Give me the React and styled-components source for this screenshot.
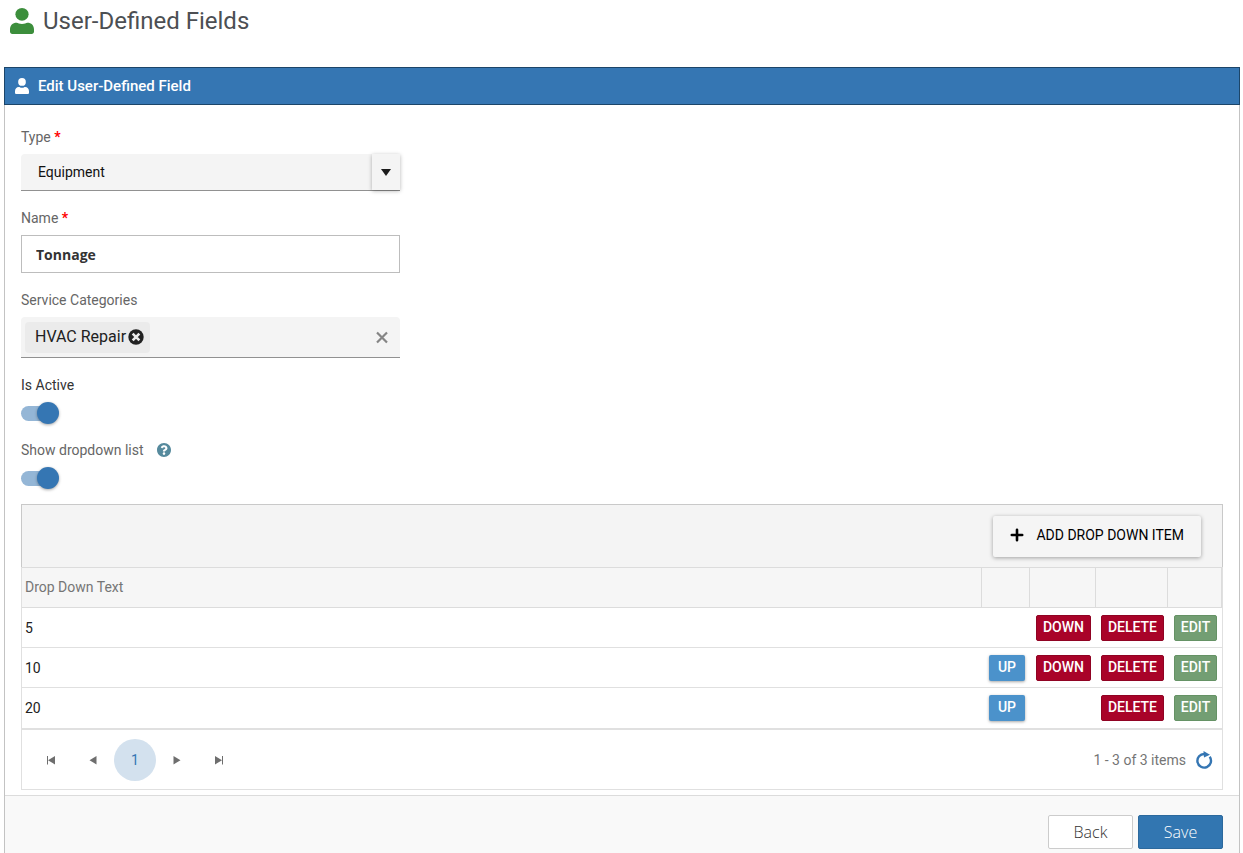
import React, { useState } from "react";
import styled, { createGlobalStyle, css } from "styled-components";

const GlobalStyle = createGlobalStyle`
  *, *::before, *::after { box-sizing: border-box; }
  body {
    margin: 0;
    background: #fff;
    color: #212121;
    font-family: Roboto, "Liberation Sans", sans-serif;
    font-size: 14px;
    line-height: 20px;
  }
  button, input, select { font: inherit; color: inherit; margin: 0; }
  button { cursor: pointer; }
`;

const Page = styled.main`
  padding: 0 3px 0 4px;
`;

const PageTitle = styled.h1`
  display: flex;
  align-items: center;
  gap: 9px;
  height: 41px;
  margin: 0 0 26px;
  padding-left: 6px;
  color: #4c4f53;
  font-size: 24px;
  font-weight: 400;
  line-height: 40px;
`;

const PanelHeader = styled.header`
  display: flex;
  align-items: center;
  gap: 9px;
  height: 38px;
  padding: 0 10px;
  border: 1px solid #1c4569;
  background: #3576b3;
  color: #fff;
`;

const PanelTitle = styled.h2`
  margin: 0;
  font-size: 15px;
  font-weight: 500;
  line-height: 20px;
`;

const PanelBody = styled.form`
  border: solid #c3c3c3;
  border-width: 0 1px;
`;

const Fields = styled.div`
  padding: 22px 16px 5px;
`;

const Field = styled.div`
  display: flex;
  flex-direction: column;
  align-items: flex-start;
  gap: 7px;
  width: 100%;
  max-width: 379px;
  margin-bottom: ${(p) => p.$after || 17}px;
`;

const LabelRow = styled.div`
  display: flex;
  align-items: center;
  gap: 13px;
`;

const Label = styled.label`
  color: ${(p) => (p.$dark ? "#333" : "#666")};
  line-height: 20px;
`;

const Required = styled.span`
  color: #f00;
  font-weight: 700;
`;

const SelectBox = styled.div`
  display: grid;
  width: 100%;
  height: 37px;
  border-bottom: 1px solid #919191;
  border-radius: 4px 4px 0 0;
  background: #f4f4f4;
`;

const Select = styled.select`
  grid-area: 1 / 1;
  width: 100%;
  padding: 0 44px 0 17px;
  border: 0;
  background: transparent;
  appearance: none;
  color: #111;
`;

const SelectCaret = styled.span`
  display: flex;
  grid-area: 1 / 1;
  align-items: center;
  justify-content: center;
  justify-self: end;
  width: 28px;
  background: #f4f4f4;
  box-shadow: 0 1px 4px rgba(0, 0, 0, 0.3);
  pointer-events: none;
`;

const TextInput = styled.input`
  width: 100%;
  height: 38px;
  padding: 0 14px;
  border: 1px solid #bdbdbd;
  border-radius: 0;
  background: #fff;
  color: #333;
  font-family: "Open Sans", sans-serif;
  font-size: 14px;
  font-weight: 700;
`;

const MultiSelect = styled.div`
  display: flex;
  align-items: center;
  width: 100%;
  height: 41px;
  padding: 0 10px 0 4px;
  border-bottom: 1px solid #919191;
  border-radius: 4px 4px 0 0;
  background: #f4f4f4;
`;

const Chip = styled.span`
  display: flex;
  align-items: center;
  gap: 2px;
  height: 31px;
  padding: 0 6px 0 10px;
  border-radius: 4px;
  background: #ebebeb;
  font-size: 16px;
  white-space: nowrap;
`;

const MultiInput = styled.input`
  flex: 1;
  min-width: 0;
  border: 0;
  background: transparent;
  outline: 0;
`;

const IconButton = styled.button`
  display: flex;
  padding: 0;
  border: 0;
  background: none;
  color: ${(p) => p.$color || "#222"};
`;

const Switch = styled.input`
  display: grid;
  align-items: center;
  width: 38px;
  height: 22px;
  appearance: none;
  cursor: pointer;

  &::before,
  &::after {
    content: "";
    grid-area: 1 / 1;
  }

  &::before {
    width: 34px;
    height: 15px;
    border-radius: 8px;
    background: #94b6d6;
  }

  &::after {
    justify-self: end;
    width: 22px;
    height: 22px;
    border-radius: 50%;
    background: #3576b3;
    box-shadow: 0 1px 3px rgba(0, 0, 0, 0.35);
  }

  &:not(:checked)::after {
    justify-self: start;
  }
`;

const Grid = styled.section`
  border: 1px solid #e0e0e0;
`;

const GridToolbar = styled.div`
  display: flex;
  justify-content: flex-end;
  margin: -1px -1px 0;
  padding: 11px 21px 10px;
  border: solid #c9c9c9;
  border-width: 1px 1px 0;
  background: #f4f4f4;
`;

const AddButton = styled.button`
  display: flex;
  align-items: center;
  gap: 12px;
  height: 41px;
  padding: 0 17px 3px;
  border: 0;
  border-radius: 2px;
  background: #f5f5f5;
  box-shadow: 0 1px 4px rgba(0, 0, 0, 0.35);
  color: #000;
  text-transform: uppercase;
`;

const Table = styled.table`
  width: 100%;
  border-spacing: 0;
  table-layout: fixed;
`;

const Col = styled.col`
  width: ${(p) => p.$width};
`;

const HeadCell = styled.th`
  height: 41px;
  padding: 0 3px 2px;
  border: solid #dcdcdc;
  border-width: 1px 1px 1px 0;
  background: #f6f6f6;
  color: #757575;
  font-weight: 400;
  text-align: left;
`;

const Cell = styled.td`
  height: 40px;
  padding: 0 0 0 ${(p) => p.$indent || 3}px;
  border-bottom: 1px solid #e0e0e0;
  color: #212121;

  tr:last-child > & {
    height: 41px;
  }
`;

const tones = {
  up: css`
    width: 36px;
    background: #4b92cb;
    box-shadow: 0 1px 3px rgba(0, 0, 0, 0.35);
  `,
  down: css`
    width: 55px;
    background: #a90329;
    border-color: #900323;
  `,
  remove: css`
    width: 63px;
    background: #a90329;
    border-color: #900323;
  `,
  edit: css`
    width: 43px;
    background: #739e73;
    border-color: #659265;
  `,
};

const RowButton = styled.button`
  display: block;
  height: 26px;
  padding: 0 0 2px;
  border: 1px solid transparent;
  border-radius: 2px;
  color: #fff;
  font-weight: 500;
  line-height: 20px;
  text-align: center;
  ${(p) => tones[p.$tone]}
`;

const Pager = styled.nav`
  display: flex;
  align-items: center;
  height: 60px;
  padding: 0 9px 0 8px;
  border-top: 1px solid #e0e0e0;
`;

const PageButton = styled.button`
  display: flex;
  align-items: center;
  justify-content: center;
  width: 42px;
  height: 42px;
  padding: 0;
  border: 0;
  border-radius: 50%;
  background: ${(p) => (p.$current ? "#d3e1ee" : "transparent")};
  color: ${(p) => (p.$current ? "#3576b3" : "#6e6e6e")};
`;

const PagerInfo = styled.span`
  margin: 0 9px 0 auto;
  color: #757575;
`;

const Footer = styled.footer`
  display: flex;
  justify-content: flex-end;
  gap: 5px;
  padding: 19px 16px 4px;
  border-top: 1px solid #dcdcdc;
  background: #f9f9f9;
`;

const FooterButton = styled.button`
  width: 85px;
  height: 34px;
  padding: 0;
  border: 1px solid ${(p) => (p.$primary ? "#2c699d" : "#ccc")};
  border-radius: 2px;
  background: ${(p) => (p.$primary ? "#3276b1" : "#fff")};
  color: ${(p) => (p.$primary ? "#fff" : "#333")};
  font-family: "Open Sans", sans-serif;
  font-size: 16px;
  font-weight: 300;
`;

const UserIcon = ({ width, height, color }) => (
  <svg width={width} height={height} viewBox="0 0 24 27" preserveAspectRatio="none" fill={color} aria-hidden="true">
    <circle cx="12" cy="6.6" r="6.6" />
    <path d="M0 22.2C0 18 2.700 15.200 6.600 15.200c1.500 0 2.600 1.300 5.400 1.300s3.900-1.300 5.400-1.300c3.900 0 6.600 2.800 6.600 7v2.500c0 1.300-1 2.300-2.300 2.300H2.300C1 27 0 26 0 24.700z" />
  </svg>
);

const CrossCircleIcon = () => (
  <svg width="16" height="16" viewBox="0 0 16 16" aria-hidden="true">
    <circle cx="8" cy="8" r="7.700" fill="#222" />
    <path d="M5.600 5.600l4.800 4.800M10.400 5.600l-4.800 4.800" stroke="#ebebeb" strokeWidth="2.600" strokeLinecap="square" />
  </svg>
);

const CrossIcon = () => (
  <svg width="16" height="16" viewBox="0 0 16 16" fill="none" stroke="currentColor" strokeWidth="2.200" aria-hidden="true">
    <path d="M3 3.500l10 10M13 3.500l-10 10" />
  </svg>
);

const HelpIcon = () => (
  <svg width="14" height="14" viewBox="8 8 496 496" fill="#568a9d" role="img" aria-label="Help">
    <path d="M504 256c0 137-111 248-248 248S8 393 8 256C8 119.100 119 8 256 8s248 111.100 248 248zM262.700 90c-54.500 0-89.300 23-116.500 63.800-3.500 5.300-2.400 12.400 2.700 16.300l34.700 26.300c5.200 3.900 12.600 3 16.700-2.100 17.900-22.700 30.100-35.800 57.300-35.800 20.400 0 45.700 13.100 45.700 33 0 15-12.400 22.700-32.500 34C247.100 238.500 216 254.900 216 296v4c0 6.600 5.400 12 12 12h56c6.600 0 12-5.400 12-12v-1.300c0-28.500 83.200-29.600 83.200-106.700 0-58-60.200-102-116.500-102zM256 338c-25.400 0-46 20.600-46 46s20.600 46 46 46 46-20.600 46-46-20.600-46-46-46z" />
  </svg>
);

const PlusIcon = () => (
  <svg width="14" height="14" viewBox="0 0 14 14" stroke="#000" strokeWidth="2.600" strokeLinecap="round" aria-hidden="true">
    <path d="M7 1.800v10.400M1.800 7h10.400" />
  </svg>
);

const CaretIcon = () => (
  <svg width="10" height="7" viewBox="0 0 10 7" fill="#1c1c1c" aria-hidden="true">
    <path d="M0 0h10L5 7z" />
  </svg>
);

const ArrowIcon = ({ back, edge }) => (
  <svg width="10" height="10" viewBox="0 0 10 10" fill="currentColor" aria-hidden="true">
    <g transform={back ? "matrix(-1 0 0 1 10 0)" : undefined}>
      <path d={edge ? "M1 1l7 4.200-7 4.200z" : "M1.500 1l7 4.200-7 4.200z"} />
      {edge && <path d="M8 1h1v8.500H8z" />}
    </g>
  </svg>
);

const ReloadIcon = () => (
  <svg width="18" height="18" viewBox="0 0 18 18" aria-hidden="true">
    <path d="M14.700 5.800A6.800 6.800 0 1 1 9.500 3" fill="none" stroke="currentColor" strokeWidth="2.400" />
    <path d="M8.500 0l6.500 3.700-6 2.800z" fill="currentColor" />
  </svg>
);

const rows = [
  { text: "5", down: true },
  { text: "10", up: true, down: true },
  { text: "20", up: true },
];

export default function App() {
  const [name, setName] = useState("Tonnage");
  const [active, setActive] = useState(true);
  const [dropdown, setDropdown] = useState(true);

  return (
    <>
      <GlobalStyle />
      <Page>
        <PageTitle>
          <UserIcon width={24} height={26} color="#3c8e3c" />
          User-Defined Fields
        </PageTitle>
        <PanelHeader>
          <UserIcon width={14} height={16} color="#fff" />
          <PanelTitle>Edit User-Defined Field</PanelTitle>
        </PanelHeader>
        <PanelBody onSubmit={(e) => e.preventDefault()}>
          <Fields>
            <Field>
              <Label htmlFor="type">
                Type <Required>*</Required>
              </Label>
              <SelectBox>
                <Select id="type" defaultValue="Equipment">
                  <option>Equipment</option>
                </Select>
                <SelectCaret>
                  <CaretIcon />
                </SelectCaret>
              </SelectBox>
            </Field>
            <Field>
              <Label htmlFor="name">
                Name <Required>*</Required>
              </Label>
              <TextInput id="name" type="text" value={name} onChange={(e) => setName(e.target.value)} />
            </Field>
            <Field>
              <Label htmlFor="categories">Service Categories</Label>
              <MultiSelect>
                <Chip>
                  HVAC Repair
                  <IconButton type="button" aria-label="Remove HVAC Repair">
                    <CrossCircleIcon />
                  </IconButton>
                </Chip>
                <MultiInput id="categories" type="text" />
                <IconButton type="button" aria-label="Clear" $color="#858585">
                  <CrossIcon />
                </IconButton>
              </MultiSelect>
            </Field>
            <Field $after={16}>
              <Label htmlFor="active" $dark>
                Is Active
              </Label>
              <Switch id="active" type="checkbox" checked={active} onChange={(e) => setActive(e.target.checked)} />
            </Field>
            <Field $after={15}>
              <LabelRow>
                <Label htmlFor="dropdown">Show dropdown list</Label>
                <HelpIcon />
              </LabelRow>
              <Switch id="dropdown" type="checkbox" checked={dropdown} onChange={(e) => setDropdown(e.target.checked)} />
            </Field>
            <Grid>
              <GridToolbar>
                <AddButton type="button">
                  <PlusIcon />
                  Add Drop Down Item
                </AddButton>
              </GridToolbar>
              <Table>
                <colgroup>
                  <Col $width="auto" />
                  <Col $width="48px" />
                  <Col $width="66px" />
                  <Col $width="72px" />
                  <Col $width="54px" />
                </colgroup>
                <thead>
                  <tr>
                    <HeadCell scope="col">Drop Down Text</HeadCell>
                    <HeadCell />
                    <HeadCell />
                    <HeadCell />
                    <HeadCell />
                  </tr>
                </thead>
                <tbody>
                  {rows.map((row) => (
                    <tr key={row.text}>
                      <Cell>{row.text}</Cell>
                      <Cell $indent={7}>{row.up && <RowButton type="button" $tone="up">UP</RowButton>}</Cell>
                      <Cell $indent={6}>{row.down && <RowButton type="button" $tone="down">DOWN</RowButton>}</Cell>
                      <Cell $indent={5}>
                        <RowButton type="button" $tone="remove">DELETE</RowButton>
                      </Cell>
                      <Cell $indent={6}>
                        <RowButton type="button" $tone="edit">EDIT</RowButton>
                      </Cell>
                    </tr>
                  ))}
                </tbody>
              </Table>
              <Pager aria-label="Pages">
                <PageButton type="button" aria-label="First page">
                  <ArrowIcon back edge />
                </PageButton>
                <PageButton type="button" aria-label="Previous page">
                  <ArrowIcon back />
                </PageButton>
                <PageButton type="button" $current>1</PageButton>
                <PageButton type="button" aria-label="Next page">
                  <ArrowIcon />
                </PageButton>
                <PageButton type="button" aria-label="Last page">
                  <ArrowIcon edge />
                </PageButton>
                <PagerInfo>1 - 3 of 3 items</PagerInfo>
                <IconButton type="button" aria-label="Refresh" $color="#3576b3">
                  <ReloadIcon />
                </IconButton>
              </Pager>
            </Grid>
          </Fields>
          <Footer>
            <FooterButton type="button">Back</FooterButton>
            <FooterButton type="submit" $primary>Save</FooterButton>
          </Footer>
        </PanelBody>
      </Page>
    </>
  );
}
